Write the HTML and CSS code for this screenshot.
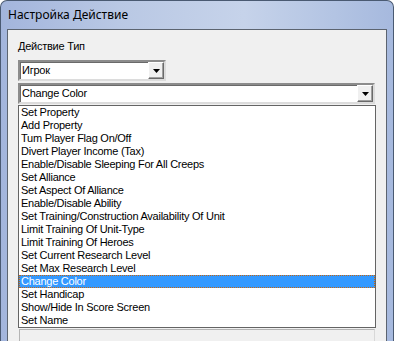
FILE: index.html
```html
<!DOCTYPE html>
<html lang="ru">
<head>
<meta charset="UTF-8">
<title>Настройка Действие</title>
<link rel="stylesheet" href="styles.css">
</head>
<body>
<div class="window">
  <div class="titlebar">
    <span class="title">Настройка Действие</span>
  </div>
  <div class="client">
    <div class="field-label">Действие Тип</div>
    <div class="combo combo-player">
      <span class="combo-text">Игрок</span>
      <span class="combo-btn"><svg width="7" height="4" viewBox="0 0 7 4"><path d="M0 0h7L3.5 4z" fill="#000"/></svg></span>
    </div>
    <div class="combo combo-action">
      <span class="combo-text">Change Color</span>
      <span class="combo-btn"><svg width="7" height="4" viewBox="0 0 7 4"><path d="M0 0h7L3.5 4z" fill="#000"/></svg></span>
    </div>
    <ul class="droplist">
      <li>Set Property</li>
      <li>Add Property</li>
      <li>Tum Player Flag On/Off</li>
      <li>Divert Player Income (Tax)</li>
      <li>Enable/Disable Sleeping For All Creeps</li>
      <li>Set Alliance</li>
      <li>Set Aspect Of Alliance</li>
      <li>Enable/Disable Ability</li>
      <li>Set Training/Construction Availability Of Unit</li>
      <li>Limit Training Of Unit-Type</li>
      <li>Limit Training Of Heroes</li>
      <li>Set Current Research Level</li>
      <li>Set Max Research Level</li>
      <li class="selected">Change Color</li>
      <li>Set Handicap</li>
      <li>Show/Hide In Score Screen</li>
      <li>Set Name</li>
    </ul>
    <div class="panel"></div>
  </div>
</div>
</body>
</html>
```

FILE: styles.css
```css
/* dialog window */
body {
  margin: 0;
  background: #ffffff;
  font-family: "Liberation Sans", Arial, sans-serif;
  font-size: 11px;
  letter-spacing: -0.25px;
  overflow: hidden;
}

.window {
  width: 394px;
  height: 341px;
  box-sizing: border-box;
  border: 1px solid #4a5a72;
  border-bottom: none;
  border-radius: 7px 7px 0 0;
  padding: 0 6px;
  display: flex;
  flex-direction: column;
  background: linear-gradient(90deg, #a3b5dc 0, #b9c8e4 30%, #c6d3ea 62%, #b3c4e3 85%, #a6b9de 100%);
}

.titlebar {
  height: 28px;
  flex: none;
}

.title {
  display: block;
  font-family: "Noto Sans", "Open Sans", sans-serif;
  font-size: 12px;
  letter-spacing: 0;
  line-height: 16px;
  padding-top: 6px;
  padding-left: 1px;
  color: #000;
}

.client {
  flex: 1;
  overflow: hidden;
  box-sizing: border-box;
  border: 1px solid #5c6470;
  border-bottom: none;
  background: #f0f0f0;
  padding: 10px 0 0 10px;
}

.field-label {
  line-height: 13px;
  height: 13px;
  color: #000;
}

.combo {
  box-sizing: border-box;
  height: 21px;
  background: #fff;
  border-style: solid;
  border-width: 2px;
  border-color: #8c8c8c #dcdcdc #dcdcdc #8c8c8c;
  box-shadow: inset 1px 1px 0 #6a6a6a;
  display: flex;
  align-items: center;
  justify-content: space-between;
}

.combo-player {
  width: 148px;
  margin-top: 7px;
}

.combo-action {
  width: 357px;
  margin-top: 2px;
}

.combo-text {
  padding-left: 2px;
  line-height: 13px;
  color: #000;
}

.combo-btn {
  width: 16px;
  height: 17px;
  box-sizing: border-box;
  background: #f0f0f0;
  border-style: solid;
  border-width: 1px;
  border-color: #ffffff #6a6a6a #6a6a6a #ffffff;
  box-shadow: inset -1px -1px 0 #a0a0a0;
  display: flex;
  align-items: center;
  justify-content: center;
}

.droplist {
  list-style: none;
  margin: 1px 0 0 0;
  padding: 0;
  width: 358px;
  box-sizing: border-box;
  border: 1px solid #646464;
  background: #fff;
  position: relative;
  z-index: 1;
}

.droplist li {
  height: 13px;
  line-height: 13px;
  padding-left: 2px;
  color: #000;
  white-space: nowrap;
  overflow: hidden;
}

.droplist li.selected {
  background: #3399ff;
  color: #fff;
  outline: 1px dotted #c8660f;
  outline-offset: -1px;
}

.panel {
  margin: 1px 0 0 1px;
  width: 356px;
  height: 40px;
  box-sizing: border-box;
  border: 1px solid #b4b4b4;
  border-right-color: #d8d8d8;
}
```
